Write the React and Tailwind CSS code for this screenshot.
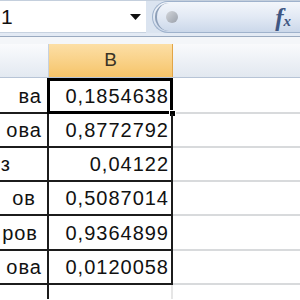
import React from "react";

const rows = [
  { a: "ва", aPad: "pr-[5px]", b: "0,1854638", h: "h-[35px]" },
  { a: "ова", aPad: "pr-[5px]", b: "0,8772792", h: "h-[34px]" },
  { a: "з", aPad: "pr-[36px]", b: "0,04122", h: "h-[34px]" },
  { a: "ов", aPad: "pr-[11px]", b: "0,5087014", h: "h-[34px]" },
  { a: "ров", aPad: "pr-[9px]", b: "0,9364899", h: "h-[35px]" },
  { a: "ова", aPad: "pr-[5px]", b: "0,0120058", h: "h-[34px]" },
];

export default function App() {
  return (
    <div
      className="w-[300px] h-[300px] overflow-hidden bg-white text-[#111111]"
      style={{ fontFamily: '"Liberation Sans", "DejaVu Sans", sans-serif' }}
    >
      {/* top: name box + formula bar */}
      <div className="h-[33px] flex bg-[#dbe4f0] border-t border-[#c4cfdd]">
        <div className="w-[146px] bg-white flex items-center justify-between pl-[1px] pr-[5px] border-b border-[#c7d2e0]">
          <span className="text-[21px] leading-none">1</span>
          <svg width="11" height="6" viewBox="0 0 11 6">
            <path d="M0 0 L11 0 L5.5 6 Z" fill="#111" />
          </svg>
        </div>
        <div className="w-[6px]" />
        <div className="flex-1 flex items-center rounded-l-full border border-r-0 border-[#9fb2cc] bg-gradient-to-b from-[#f3f6fb] via-[#e2e9f4] to-[#cbd8ea]">
          <div className="w-[28px] h-[28px] ml-[2px] rounded-full border-l-2 border-[#8d9fb8] flex items-center justify-center">
            <div className="w-[12px] h-[12px] ml-[4px] rounded-full bg-gradient-to-br from-[#d3d6db] to-[#9aa0aa]" />
          </div>
          <div className="flex-1" />
          <div
            className="mr-[9px] flex items-end italic text-[#3f5682] leading-none"
            style={{ fontFamily: '"Liberation Serif", serif' }}
          >
            <span className="text-[25px] font-bold">f</span>
            <span className="text-[15px] font-bold mb-[1px]">x</span>
          </div>
        </div>
      </div>
      <div className="h-[3px] bg-[#e3eaf4]" />
      <div className="h-[1px] bg-[#9aaac0]" />
      <div className="h-[7px] bg-[#f4f6f9]" />

      {/* column headers */}
      <div className="h-[34px] grid grid-cols-[49px_124px_1fr] border-b border-[#b7c4d6]">
        <div className="bg-gradient-to-b from-[#fafbfd] to-[#e3e9f1] border-r border-[#c6d1df]" />
        <div className="bg-gradient-to-b from-[#fcdfa6] to-[#f6c468] border-r border-[#e2a547] flex items-center justify-center">
          <span className="text-[19px] text-[#3b3426]">B</span>
        </div>
        <div className="bg-gradient-to-b from-[#f9fafc] to-[#e2e8f0]" />
      </div>
      <div className="h-[1px] bg-white" />

      {/* rows */}
      {rows.map((r, i) => (
        <div key={i} className={`grid grid-cols-[49px_124px_1fr] ${r.h}`}>
          <div
            className={`border-r-2 border-b-2 border-[#1c1c1c] flex items-center justify-end overflow-hidden ${r.aPad} text-[20px] tracking-[1px]`}
          >
            <span className="whitespace-nowrap">{r.a}</span>
          </div>
          <div className="relative border-r-2 border-b-2 border-[#1c1c1c] flex items-center justify-end pr-[2px] text-[20px] tracking-[1px]">
            <span className="whitespace-nowrap">{r.b}</span>
            {i === 0 && (
              <>
                <div className="absolute -top-[1px] -left-[2px] -right-[2px] -bottom-[2px] border-[3px] border-black pointer-events-none" />
                <div className="absolute -right-[5px] -bottom-[5px] w-[7px] h-[7px] bg-black border border-white" />
              </>
            )}
          </div>
          <div className="border-b-2 border-[#d8dadc]" />
        </div>
      ))}
      <div className="h-[14px] grid grid-cols-[49px_124px_1fr]">
        <div className="border-r-2 border-[#1c1c1c]" />
        <div className="border-r-2 border-[#e6e6e6]" />
        <div />
      </div>
    </div>
  );
}
